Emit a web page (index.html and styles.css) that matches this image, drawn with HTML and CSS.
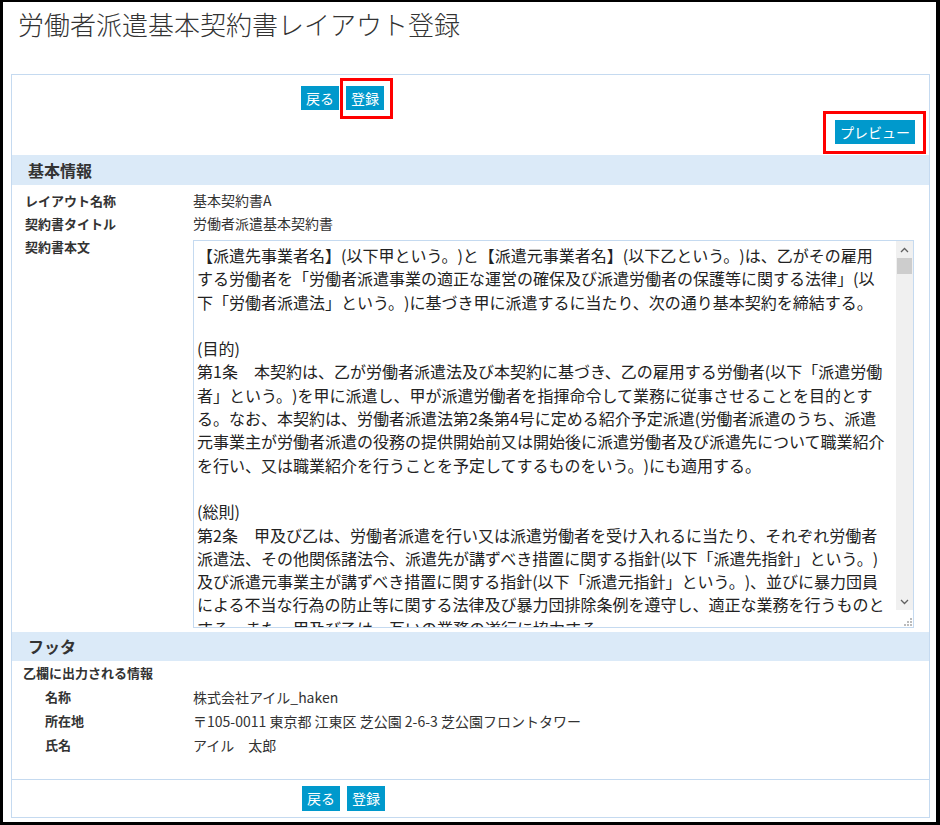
FILE: index.html
```html
<!DOCTYPE html>
<html lang="ja">

<head>
  <meta charset="UTF-8">
  <meta name="viewport" content="width=device-width, initial-scale=1.0">
  <title>労働者派遣基本契約書レイアウト登録</title>
  <link rel="stylesheet" href="styles.css">
</head>

<body>
  <div class="frame">
    <h1 class="page-title">労働者派遣基本契約書レイアウト登録</h1>

    <div class="panel">
      <div class="top-actions">
        <div class="btn-row">
          <button class="btn">戻る</button>
          <span class="mark mark-save"><button class="btn">登録</button></span>
        </div>
        <div class="preview-row">
          <span class="mark mark-preview"><button class="btn">プレビュー</button></span>
        </div>
      </div>

      <!-- 基本情報 -->
      <h2 class="section-head">基本情報</h2>
      <div class="section-body">
        <div class="field">
          <div class="field-label">レイアウト名称</div>
          <div class="field-value">基本契約書A</div>
        </div>
        <div class="field">
          <div class="field-label">契約書タイトル</div>
          <div class="field-value">労働者派遣基本契約書</div>
        </div>
        <div class="field">
          <div class="field-label">契約書本文</div>
          <div class="field-value">
            <div class="body-text">
              <div class="body-lines">
                <p>【派遣先事業者名】(以下甲という。)と【派遣元事業者名】(以下乙という。)は、乙がその雇用</p>
                <p>する労働者を「労働者派遣事業の適正な運営の確保及び派遣労働者の保護等に関する法律」(以</p>
                <p>下「労働者派遣法」という。)に基づき甲に派遣するに当たり、次の通り基本契約を締結する。</p>
                <p></p>
                <p>(目的)</p>
                <p>第1条　本契約は、乙が労働者派遣法及び本契約に基づき、乙の雇用する労働者(以下「派遣労働</p>
                <p>者」という。)を甲に派遣し、甲が派遣労働者を指揮命令して業務に従事させることを目的とす</p>
                <p>る。なお、本契約は、労働者派遣法第2条第4号に定める紹介予定派遣(労働者派遣のうち、派遣</p>
                <p>元事業主が労働者派遣の役務の提供開始前又は開始後に派遣労働者及び派遣先について職業紹介</p>
                <p>を行い、又は職業紹介を行うことを予定してするものをいう。)にも適用する。</p>
                <p></p>
                <p>(総則)</p>
                <p>第2条　甲及び乙は、労働者派遣を行い又は派遣労働者を受け入れるに当たり、それぞれ労働者</p>
                <p>派遣法、その他関係諸法令、派遣先が講ずべき措置に関する指針(以下「派遣先指針」という。)</p>
                <p>及び派遣元事業主が講ずべき措置に関する指針(以下「派遣元指針」という。)、並びに暴力団員</p>
                <p>による不当な行為の防止等に関する法律及び暴力団排除条例を遵守し、適正な業務を行うものと</p>
                <p>する。また、甲及び乙は、互いの業務の遂行に協力する。</p>
              </div>
              <div class="scrollbar">
                <div class="scroll-track">
                  <div class="scroll-btn">
                    <svg width="9" height="6" viewBox="0 0 9 6"><path d="M1 5 L4.5 1.5 L8 5" fill="none" stroke="#606060" stroke-width="1.3"/></svg>
                  </div>
                  <div class="scroll-thumb"></div>
                  <div class="scroll-space"></div>
                  <div class="scroll-btn">
                    <svg width="9" height="6" viewBox="0 0 9 6"><path d="M1 1 L4.5 4.5 L8 1" fill="none" stroke="#606060" stroke-width="1.3"/></svg>
                  </div>
                </div>
                <div class="scroll-corner">
                  <svg width="12" height="12" viewBox="0 0 12 12">
                    <rect x="9" y="3" width="2" height="2" fill="#bcbcbc"/>
                    <rect x="6" y="6" width="2" height="2" fill="#bcbcbc"/>
                    <rect x="9" y="6" width="2" height="2" fill="#bcbcbc"/>
                    <rect x="3" y="9" width="2" height="2" fill="#bcbcbc"/>
                    <rect x="6" y="9" width="2" height="2" fill="#bcbcbc"/>
                    <rect x="9" y="9" width="2" height="2" fill="#bcbcbc"/>
                  </svg>
                </div>
              </div>
            </div>
          </div>
        </div>
      </div>

      <!-- フッタ -->
      <h2 class="section-head footer-head">フッタ</h2>
      <div class="footer-body">
        <div class="footer-caption">乙欄に出力される情報</div>
        <div class="field sub">
          <div class="field-label">名称</div>
          <div class="field-value">株式会社アイル_haken</div>
        </div>
        <div class="field sub">
          <div class="field-label">所在地</div>
          <div class="field-value">〒105-0011 東京都 江東区 芝公園 2-6-3 芝公園フロントタワー</div>
        </div>
        <div class="field sub">
          <div class="field-label">氏名</div>
          <div class="field-value">アイル　太郎</div>
        </div>
      </div>

      <div class="bottom-actions">
        <button class="btn">戻る</button>
        <button class="btn">登録</button>
      </div>
    </div>
  </div>
</body>

</html>
```

FILE: styles.css
```css
html,
body {
  margin: 0;
}

body {
  font-family: 'Noto Sans CJK JP', 'Noto Sans', sans-serif;
  color: #333;
  background: #fff;
  text-spacing-trim: space-all;
}

.frame {
  height: 825px;
  box-sizing: border-box;
  border: solid #000;
  border-width: 2px 4px 3px 3px;
}

.page-title {
  margin: 7px 0 0 15px;
  font-size: 26px;
  font-weight: 300;
  line-height: 30px;
}

.panel {
  margin: 35px 6px 0 8px;
  border: 1px solid #c5daf0;
}

/* buttons */
.top-actions {
  padding: 11px 14px 11px 289px;
}

.btn-row {
  display: flex;
  gap: 7px;
}

.preview-row {
  display: flex;
  justify-content: flex-end;
  margin-top: 10px;
}

.btn {
  height: 24px;
  padding: 0 5px;
  border: 0;
  background: #0099cc;
  color: #fff;
  font-family: 'Noto Sans CJK JP', sans-serif;
  font-size: 14px;
  line-height: 24px;
  cursor: pointer;
}

.mark {
  position: relative;
  display: inline-flex;
}

.mark::after {
  content: '';
  position: absolute;
  border: 3px solid #f00;
  pointer-events: none;
}

.mark-save::after {
  left: -6px;
  right: -9px;
  top: -8px;
  bottom: -9px;
}

.mark-preview::after {
  left: -12px;
  right: -11px;
  top: -9px;
  bottom: -10px;
}

/* sections */
.section-head {
  margin: 0;
  height: 30px;
  padding-left: 16px;
  background: #dbeaf8;
  font-size: 16px;
  font-weight: bold;
  line-height: 30px;
}

.footer-head {
  height: 29px;
  line-height: 29px;
}

.section-body {
  padding: 4px 15px 4px 13px;
}

.field {
  display: grid;
  grid-template-columns: 168px 1fr;
  line-height: 23px;
}

.field-label {
  font-size: 13px;
  font-weight: bold;
}

.field-value {
  font-size: 14px;
}

/* contract body box */
.body-text {
  display: flex;
  margin-top: 5px;
  height: 388px;
  box-sizing: border-box;
  border: 1px solid #c5daf0;
}

.body-lines {
  flex: 1;
  overflow: hidden;
  padding: 3px 0 0 3px;
  font-size: 16px;
  line-height: 23.3px;
  color: #222;
  white-space: nowrap;
}

.body-lines p {
  margin: 0;
  height: 23.3px;
}

.scrollbar {
  width: 17px;
  flex-shrink: 0;
  display: flex;
  flex-direction: column;
}

.scroll-track {
  flex: 1;
  display: flex;
  flex-direction: column;
  background: #f0f0f0;
}

.scroll-btn {
  height: 17px;
  display: flex;
  align-items: center;
  justify-content: center;
}

.scroll-thumb {
  height: 16px;
  margin: 0 1px;
  background: #cdcdcd;
}

.scroll-space {
  flex: 1;
}

.scroll-corner {
  height: 17px;
  display: flex;
  align-items: flex-end;
  justify-content: flex-end;
  background: #fff;
}

/* footer */
.footer-body {
  padding: 0 15px 22px 13px;
}

.footer-body .field {
  line-height: 24px;
}

.footer-caption {
  margin-left: -2px;
  font-size: 13px;
  font-weight: bold;
  line-height: 24px;
}

.field.sub .field-label {
  padding-left: 20px;
}

.bottom-actions {
  display: flex;
  gap: 7px;
  padding: 6px 0 6px 290px;
  border-top: 1px solid #c5daf0;
}

.bottom-actions .btn {
  height: 25px;
  line-height: 25px;
}
```
